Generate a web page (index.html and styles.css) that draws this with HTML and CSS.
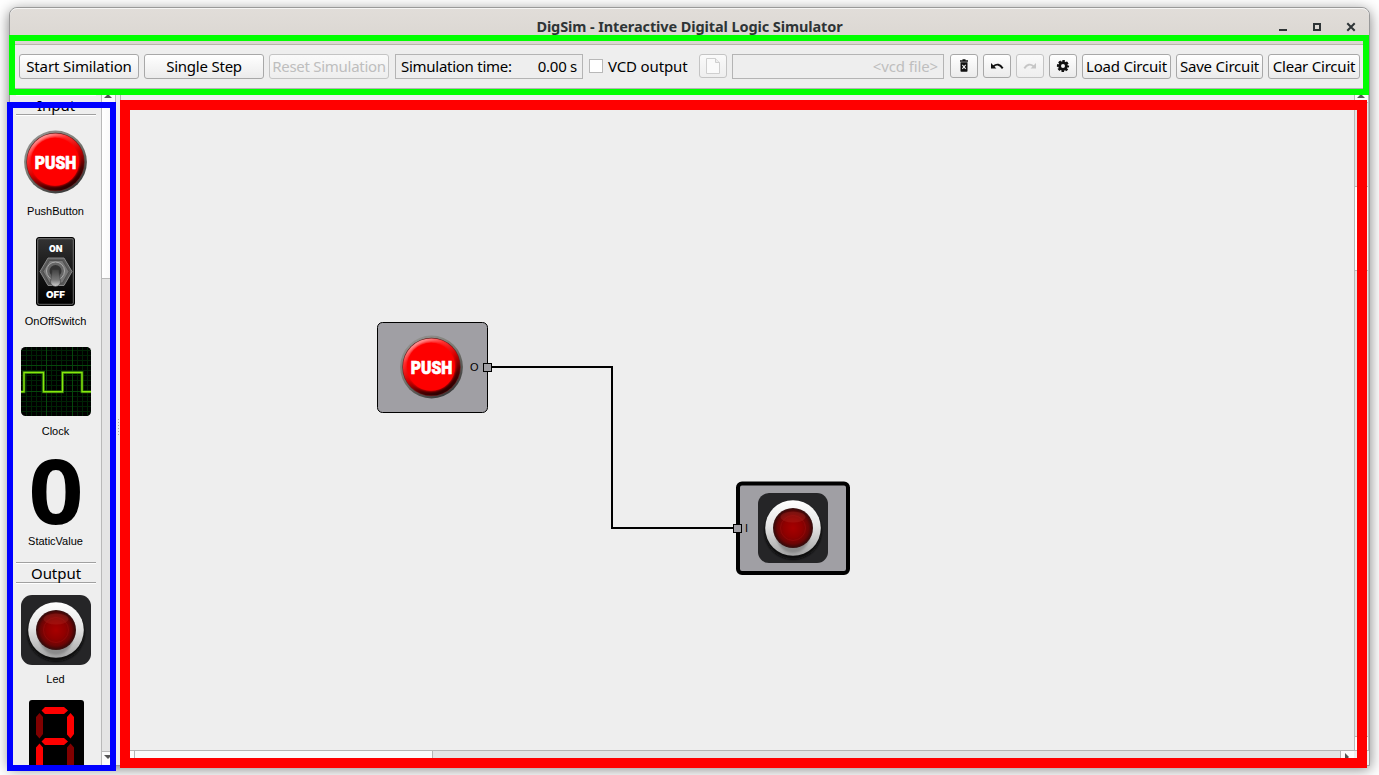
FILE: index.html
```html
<!DOCTYPE html>
<html lang="en">
<head>
<meta charset="utf-8">
<title>DigSim - Interactive Digital Logic Simulator</title>
<link rel="stylesheet" href="styles.css">
</head>
<body>
<svg class="defs" width="0" height="0">
  <defs>
    <linearGradient id="ring" x1="0" y1="0" x2="0.6" y2="1"><stop offset="0" stop-color="#999"/><stop offset=".5" stop-color="#7c7c74"/><stop offset="1" stop-color="#3c3c3c"/></linearGradient>
    <linearGradient id="bevel" x1=".25" y1=".05" x2=".75" y2=".95"><stop offset="0" stop-color="#ff9a9a"/><stop offset=".22" stop-color="#ff3030"/><stop offset=".5" stop-color="#d80000"/><stop offset=".8" stop-color="#4a0000"/><stop offset="1" stop-color="#250000"/></linearGradient>
    <linearGradient id="chrome" x1="0" y1="0" x2="0" y2="1"><stop offset="0" stop-color="#fff"/><stop offset=".45" stop-color="#e6e6e6"/><stop offset="1" stop-color="#a4a4a4"/></linearGradient>
    <radialGradient id="lens"><stop offset="0" stop-color="#a80000"/><stop offset=".5" stop-color="#900000"/><stop offset=".82" stop-color="#6c0505"/><stop offset="1" stop-color="#3c0808"/></radialGradient>
    <linearGradient id="plate" x1="0" y1="0" x2="0" y2="1"><stop offset="0" stop-color="#343434"/><stop offset=".5" stop-color="#161616"/><stop offset="1" stop-color="#000"/></linearGradient>
    <linearGradient id="lever" x1="0" y1="0" x2="0" y2="1"><stop offset="0" stop-color="#444"/><stop offset=".6" stop-color="#777"/><stop offset="1" stop-color="#d4d4d4"/></linearGradient>
    <filter id="soft" x="-20%" y="-20%" width="140%" height="140%"><feGaussianBlur stdDeviation="1.1"/></filter>
    <symbol id="push" viewBox="0 0 70 70">
      <circle cx="34.500" cy="35" r="31.400" fill="url(#ring)"/>
      <circle cx="34.500" cy="35" r="29.200" fill="#6a2222"/>
      <circle cx="34.500" cy="35" r="28.600" fill="url(#bevel)"/>
      <circle cx="34" cy="34.600" r="24.600" fill="#fe0000" filter="url(#soft)"/>
      <circle cx="34" cy="34.800" r="24" fill="#fe0000"/>
      <text x="13.800" y="42" class="push-text" textLength="41.500" lengthAdjust="spacingAndGlyphs">PUSH</text>
    </symbol>
    <symbol id="led" viewBox="0 0 70 70">
      <rect width="70" height="70" rx="11" fill="#252527"/>
      <circle cx="35" cy="38" r="28.500" fill="#0d0d0e" filter="url(#soft)"/>
      <circle cx="35" cy="35" r="27.800" fill="url(#chrome)"/>
      <path d="M18 45 Q23 60 35 60 Q47 60 52 45Z" fill="#777" opacity=".65" filter="url(#soft)"/>
      <circle cx="35" cy="35" r="20" fill="#3b1010"/>
      <circle cx="35" cy="35" r="19" fill="url(#lens)"/>
      <ellipse cx="35" cy="24" rx="12.500" ry="5.500" fill="#c84a3a" opacity=".2"/>
      <circle cx="35" cy="35" r="12.500" fill="none" stroke="#b51818" stroke-width="1" opacity=".3"/>
    </symbol>
  </defs>
</svg>
<main class="window">
  <header class="titlebar">
    <h1>DigSim - Interactive Digital Logic Simulator</h1>
    <svg class="controls" width="80" height="12" viewBox="0 0 80 12">
      <path d="M2 8.900h8" stroke="#2e3436" stroke-width="2"/>
      <rect x="37" y="3" width="6" height="6" fill="none" stroke="#2e3436" stroke-width="2"/>
      <path d="M70.300 2.300l7.400 7.400m0-7.400l-7.400 7.400" stroke="#2e3436" stroke-width="2"/>
    </svg>
  </header>
  <nav class="toolbar">
    <button class="btn wide start"><span>Start Similation</span></button>
    <button class="btn wide"><span>Single Step</span></button>
    <button class="btn wide off reset"><span>Reset Simulation</span></button>
    <div class="field time"><span>Simulation time:</span><span>0.00 s</span></div>
    <label class="check"><i class="box"></i><span>VCD output</span></label>
    <button class="btn icon off"><svg width="26" height="22" viewBox="0 0 26 22"><path d="M6.500 3.500h9l4 4v11h-13z" fill="#fafafa" stroke="#cfcfcf"/><path d="M15.500 3.500v4h4" fill="#eee" stroke="#cfcfcf"/></svg></button>
    <div class="field file"><span>&lt;vcd file&gt;</span></div>
    <button class="btn icon trash"><svg width="26" height="22" viewBox="0 0 26 22"><path d="M9 6h8M11.500 5h3" stroke="#111" stroke-width="1.300"/><path d="M9.500 7.300h7v8.700q0 .8-.8.800h-5.400q-.8 0-.8-.8z" fill="#111"/><path d="M11.300 9.800l3.400 4m0-4l-3.400 4" stroke="#eee" stroke-width="1.100"/></svg></button>
    <button class="btn icon"><svg width="26" height="22" viewBox="0 0 26 22"><path d="M7 8v5.400h5.400z" fill="#111"/><path d="M9.500 11.200q5-4 9.200 2.200" fill="none" stroke="#111" stroke-width="1.900"/></svg></button>
    <button class="btn icon off"><svg width="26" height="22" viewBox="0 0 26 22"><path d="M19 8v5.400h-5.400z" fill="#c6c6c6"/><path d="M16.500 11.200q-5-4-9.200 2.200" fill="none" stroke="#c6c6c6" stroke-width="1.900"/></svg></button>
    <button class="btn icon"><svg width="26" height="22" viewBox="0 0 26 22"><circle cx="13" cy="11" r="3.400" fill="none" stroke="#111" stroke-width="2.800"/><circle cx="13" cy="11" r="5" fill="none" stroke="#111" stroke-width="2.200" stroke-dasharray="2.400 1.527" stroke-dashoffset="1.200"/></svg></button>
    <button class="btn load"><span>Load Circuit</span></button>
    <button class="btn save"><span>Save Circuit</span></button>
    <button class="btn clear"><span>Clear Circuit</span></button>
  </nav>
  <div class="work">
    <aside class="palette">
      <h2>Input</h2>
      <figure><svg width="70" height="70"><use href="#push"/></svg><figcaption>PushButton</figcaption></figure>
      <figure><svg width="70" height="70" viewBox="0 0 70 70">
        <rect x="15.500" y=".5" width="38" height="68" rx="2.500" fill="url(#plate)" stroke="#000"/>
        <rect x="16.700" y="1.700" width="35.600" height="65.600" rx="1.500" fill="none" stroke="#777" stroke-width=".9"/>
        <text x="28" y="15" class="switch-text" textLength="13.500" lengthAdjust="spacingAndGlyphs">ON</text>
        <text x="25" y="61" class="switch-text" textLength="19" lengthAdjust="spacingAndGlyphs">OFF</text>
        <path d="M27 21h16l8 13.500-8 14H27l-8-14z" fill="#5b5b5b" stroke="#929292" stroke-width=".9"/>
        <path d="M28.500 23.500h13l6.500 11-6.500 11.500h-13L22 34.500z" fill="#777" stroke="#444" stroke-width=".7"/>
        <circle cx="34.500" cy="34" r="9" fill="#666" stroke="#aaa"/>
        <circle cx="34.500" cy="34" r="6" fill="#333"/>
        <path d="M31.500 33h6l2 11.500a5 5 0 0 1-10 0z" fill="url(#lever)" stroke="#444" stroke-width=".6"/>
      </svg><figcaption>OnOffSwitch</figcaption></figure>
      <figure><svg width="70" height="70" viewBox="0 0 70 70">
        <rect width="70" height="69" rx="4.500" fill="#000"/>
        <path d="M5.500 0v69M10.500 0v69M15.500 0v69M20.500 0v69M30.500 0v69M35.500 0v69M40.500 0v69M45.500 0v69M56.500 0v69M61.500 0v69M66.500 0v69M0 3.500h70M0 8.500h70M0 13.500h70M0 23.500h70M0 28.500h70M0 33.500h70M0 38.500h70M0 49.500h70M0 54.500h70M0 59.500h70M0 64.500h70" stroke="#002205"/>
        <path d="M25.500 0v69M51.500 0v69M0 18.500h70M0 44.500h70" stroke="#06460c"/>
        <path d="M0 44.700h3V25.500h19.500v19.200h19V25.500h19.500v19.200H70" fill="none" stroke="#205c08" stroke-width="3"/>
        <path d="M0 44.700h3V25.500h19.500v19.200h19V25.500h19.500v19.200H70" fill="none" stroke="#88e80c" stroke-width="1.400"/>
      </svg><figcaption>Clock</figcaption></figure>
      <figure><svg width="70" height="70" viewBox="0 0 70 70"><text x="7.500" y="67" class="zero" textLength="55" lengthAdjust="spacingAndGlyphs">0</text></svg><figcaption>StaticValue</figcaption></figure>
      <h2 class="second">Output</h2>
      <figure><svg width="70" height="70"><use href="#led"/></svg><figcaption>Led</figcaption></figure>
      <figure class="seven"><svg width="70" height="70" viewBox="0 0 70 70">
        <rect x="8" width="55" height="90" rx="3" fill="#000"/>
        <path d="M20.500 10.500l3.500-3.500h19l4 3.500-4 3.500H24zM49.500 13l3.500 4v17l-3.500 4.500L46 34.500V17zM20.500 41.500L24 38h19l4 3.500-4 3.500H24zM18.500 43.500l3.500 4V75h-7V47.500z" fill="#fe0000"/>
        <path d="M18.500 13l3.500 4v17l-3.500 4.500L15 34.500V17zM49.500 43.500l3.500 4V75h-7V47.500z" fill="#800000"/>
      </svg></figure>
    </aside>
    <div class="vbar left"><i class="up"></i><i class="handle"></i><i class="track"></i><i class="down"></i></div>
    <div class="splitter"><i></i></div>
    <section class="view">
      <svg class="canvas" width="1233" height="661" viewBox="121 89 1233 661">
        <rect x="377.500" y="322.500" width="110" height="90" rx="5" fill="#a09fa4" stroke="#000"/>
        <use href="#push" x="397" y="332" width="70" height="70"/>
        <text x="470" y="371" class="pin">O</text>
        <rect x="738" y="483.500" width="110" height="89.500" rx="4" fill="#a09fa4" stroke="#000" stroke-width="4"/>
        <use href="#led" x="758" y="493" width="70" height="70"/>
        <text x="745" y="532" class="pin">I</text>
        <path d="M487 367H612V528H737" fill="none" stroke="#000" stroke-width="2"/>
        <rect x="483.500" y="363.500" width="8" height="8" fill="#a09fa4" stroke="#000"/>
        <rect x="733.500" y="524.500" width="8" height="8" fill="#a09fa4" stroke="#000"/>
      </svg>
      <div class="vbar right"><i class="up"></i><i class="track"></i><i class="handle"></i><i class="track rest"></i><i class="down"></i></div>
      <div class="hbar"><i class="prev"></i><i class="handle"></i><i class="track"></i><i class="next"></i></div>
      <div class="corner"></div>
    </section>
  </div>
</main>
<div class="frame green"></div>
<div class="frame blue"></div>
<div class="frame red"></div>
</body>
</html>
```
FILE: styles.css
```css
* { box-sizing: border-box; }
html, body { height: 100%; }
body { margin: 0; padding: 7px 9px 9px; background: #fff; overflow: hidden; font-family: "Noto Sans", "Open Sans", sans-serif; color: #000; position: relative; }
.defs { position: absolute; }
i { display: block; }
.window { width: 1361px; height: 759px; border: 1px solid #999; border-radius: 8px 8px 0 0; background: #eee; box-shadow: 0 3px 14px rgba(0,0,0,.5); display: flex; flex-direction: column; overflow: hidden; }
.titlebar { height: 37px; flex: none; display: grid; grid-template-columns: 100px 1fr 100px; align-items: center; background: linear-gradient(#e1ddd9, #dad6d1); border-top: 1px solid #f6f5f4; border-bottom: 1px solid #b8b4ac; border-radius: 7px 7px 0 0; }
.titlebar h1 { margin: 0 0 1px; grid-column: 2; text-align: center; font-size: 14.5px; line-height: 20px; font-weight: 700; color: #2e3436; white-space: nowrap; letter-spacing: -.1px; }
.controls { margin: 1px 0 0 8px; }

.toolbar { height: 44px; flex: none; display: flex; align-items: flex-start; gap: 5px; padding: 9px 0 0 9px; border-bottom: 1px solid #b4b4b4; font-size: 15px; letter-spacing: -.22px; }
.toolbar span { white-space: nowrap; flex: none; margin-top: -2px; }
.btn { flex: none; height: 25px; padding: 0; display: flex; justify-content: center; align-items: center; border: 1px solid #a8a8a8; border-radius: 3px; background: linear-gradient(#fff, #ebebeb); font: inherit; letter-spacing: inherit; line-height: 20px; color: #000; }
.btn.off { color: #bebebe; border-color: #c4c4c4; background: linear-gradient(#fafafa, #eee); }
.wide { width: 120px; }
.start { letter-spacing: -.12px; }
.reset { letter-spacing: -.28px; }
.icon { width: 28px; height: 24px; }
.load { width: 89px; }
.save { width: 87px; }
.clear { width: 92px; }
.field { flex: none; height: 25px; border: 1px solid #b4b4b4; display: flex; align-items: center; justify-content: space-between; padding: 0 5px; line-height: 20px; }
.time { width: 188px; margin-left: 1px; letter-spacing: -.27px; }
.file { width: 212px; justify-content: flex-end; color: #bebebe; letter-spacing: -.12px; }
.trash { margin-left: 1px; }
.check { width: 105px; height: 25px; margin-left: 1px; display: flex; align-items: center; gap: 5px; line-height: 20px; letter-spacing: -.14px; }
.box { width: 14px; height: 14px; flex: none; border: 1px solid #b8b8b8; background: #fff; margin-top: -1px; }

.work { flex: 1; display: flex; min-height: 0; }
.palette { width: 91px; overflow: hidden; padding: 5px 0 0; display: flex; flex-direction: column; align-items: center; }
.palette h2 { flex: none; margin: 0 0 12px 1px; width: 80px; height: 21px; border: solid #a0a0a0; border-width: 1px 0; box-shadow: 0 1px #fff, inset 0 1px #fff; font-size: 15px; font-weight: 400; line-height: 20px; text-align: center; letter-spacing: -.05px; }
.palette h2.second { margin-top: -5px; }
figure { flex: none; margin: 0 0 12px 1px; width: 90px; text-align: center; }
figure svg { display: block; margin: 0 auto; }
figcaption { font: 11px/28px "Liberation Sans", Arial, sans-serif; margin-left: -1px; }
.seven { margin-top: -5px; }
.push-text { font: 900 19px Roboto, sans-serif; fill: #fff; stroke: #fff; stroke-width: .7; }
.switch-text { font: 900 9.5px Inter, sans-serif; fill: #fff; }
.zero { font: 700 89px "Open Sans", sans-serif; }
.pin { font: 11px "Liberation Sans", Arial, sans-serif; }

.vbar { width: 15px; display: flex; flex-direction: column; border-left: 1px solid #b9b9b9; border-right: 1px solid #b9b9b9; background: #e4e4e4; }
.vbar .up, .vbar .down { height: 14px; flex: none; background: #fcfcfc; display: flex; align-items: center; justify-content: center; }
.vbar .down { padding-bottom: 3px; }
.up { border-bottom: 1px solid #b9b9b9; }
.down { border-top: 1px solid #b9b9b9; }
.up::before, .down::before { content: ""; border: 4px solid transparent; }
.up::before { border-top: 0; border-bottom-color: #555; }
.down::before { border-bottom: 0; border-top-color: #555; }
.left .up, .left .down { padding-right: 2px; }
.handle { background: linear-gradient(90deg, #fff, #f5f5f5); border-bottom: 1px solid #b9b9b9; }
.left .handle { height: 176px; }
.track { flex: 1; background: #e4e4e4; }
.splitter { width: 4px; display: flex; align-items: center; justify-content: center; }
.splitter i { width: 1px; height: 17px; background: repeating-linear-gradient(#aaa 0 1px, transparent 1px 3px); }
.view { flex: 1; border-left: 1px solid #b4b4b4; display: grid; grid-template-columns: 1233px 1fr; grid-template-rows: 661px 1fr; min-width: 0; }
.canvas { display: block; }
.right { width: 15px; }
.right .up { height: 14px; padding-right: 2px; }
.right .track { flex: 0 0 83px; }
.right .handle { height: 85px; border-top: 1px solid #b9b9b9; }
.vbar .rest.track { flex: 1; }
.hbar { display: flex; border-top: 1px solid #b4b4b4; }
.hbar .handle { width: 299px; border: solid #b4b4b4; border-width: 0 1px; background: #fafafa; }
.prev { width: 13px; background: #fcfcfc; }
.next { width: 14px; background: #fcfcfc; border-left: 1px solid #b4b4b4; display: flex; align-items: center; justify-content: center; }
.next::before { content: ""; border: 4px solid transparent; border-right: 0; border-left-color: #555; margin: -2px 2px 0 0; }
.corner { border-top: 1px solid #b4b4b4; }

/* Highlight frames laid over the window regions */
.frame { position: absolute; pointer-events: none; }
.green { left: 9px; top: 35px; width: 1360px; height: 60px; border: 6px solid #0f0; }
.blue { left: 7px; top: 102px; width: 109px; height: 669px; border: 6px solid #00f; }
.red { left: 120px; top: 100px; width: 1247px; height: 668px; border: 10px solid #f00; }
```
